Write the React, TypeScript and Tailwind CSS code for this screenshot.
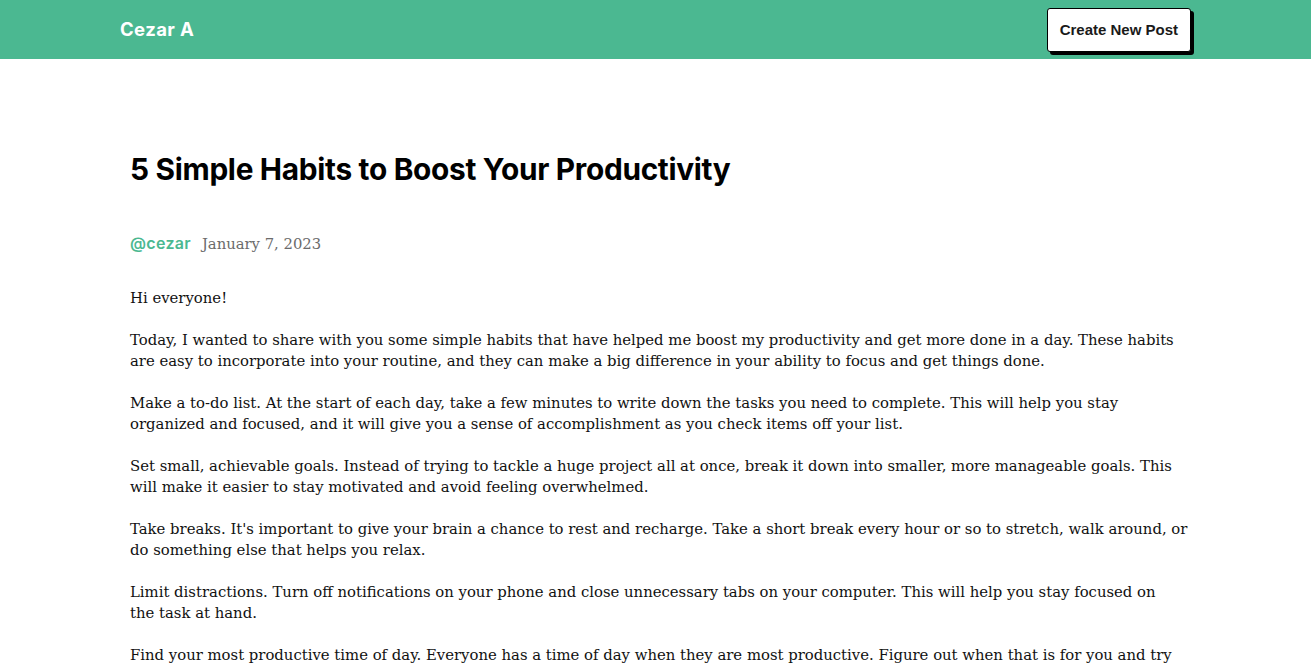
import React from "react";

const paragraphs: string[][] = [
  ["Hi everyone!"],
  [
    "Today, I wanted to share with you some simple habits that have helped me boost my productivity and get more done in a day. These habits",
    "are easy to incorporate into your routine, and they can make a big difference in your ability to focus and get things done.",
  ],
  [
    "Make a to-do list. At the start of each day, take a few minutes to write down the tasks you need to complete. This will help you stay",
    "organized and focused, and it will give you a sense of accomplishment as you check items off your list.",
  ],
  [
    "Set small, achievable goals. Instead of trying to tackle a huge project all at once, break it down into smaller, more manageable goals. This",
    "will make it easier to stay motivated and avoid feeling overwhelmed.",
  ],
  [
    "Take breaks. It's important to give your brain a chance to rest and recharge. Take a short break every hour or so to stretch, walk around, or",
    "do something else that helps you relax.",
  ],
  [
    "Limit distractions. Turn off notifications on your phone and close unnecessary tabs on your computer. This will help you stay focused on",
    "the task at hand.",
  ],
  [
    "Find your most productive time of day. Everyone has a time of day when they are most productive. Figure out when that is for you and try",
  ],
];

export default function App() {
  return (
    <div className="min-h-screen bg-white">
      <header className="h-[59px] bg-[#4bb891]">
        <div className="mx-auto flex h-full w-[1071px] items-center justify-between">
          <span className="font-['Inter',sans-serif] text-[18.5px] font-bold tracking-[0.4px] text-white">
            Cezar A
          </span>
          <button className="mt-[1px] h-[44px] rounded-[3px] border border-black bg-white px-[12px] font-['Liberation_Sans',Arial,sans-serif] text-[15px] font-bold text-[#1a1a1a] shadow-[3px_3px_0_#000]">
            Create New Post
          </button>
        </div>
      </header>
      <main className="mx-auto w-[1071px] px-[10px] pt-[92px]">
        <h1 className="font-['Inter',sans-serif] text-[29.8px] font-bold leading-[36px] tracking-[-0.3px] text-black">
          5 Simple Habits to Boost Your Productivity
        </h1>
        <div className="mt-[44px] flex items-baseline gap-[11px]">
          <span className="font-['Inter',sans-serif] text-[16px] font-semibold tracking-[0.3px] text-[#4bb891]">
            @cezar
          </span>
          <span className="font-['DejaVu_Serif',serif] text-[14.8px] text-[#6b6b6b]">
            January 7, 2023
          </span>
        </div>
        <div className="mt-[33px] font-['DejaVu_Serif',serif] text-[14.85px] leading-[21px] text-[#111]">
          {paragraphs.map((lines, i) => (
            <p key={i} className="mb-[21px]">
              {lines.map((l, j) => (
                <span key={j} className="block whitespace-nowrap">
                  {l}
                </span>
              ))}
            </p>
          ))}
        </div>
      </main>
    </div>
  );
}
